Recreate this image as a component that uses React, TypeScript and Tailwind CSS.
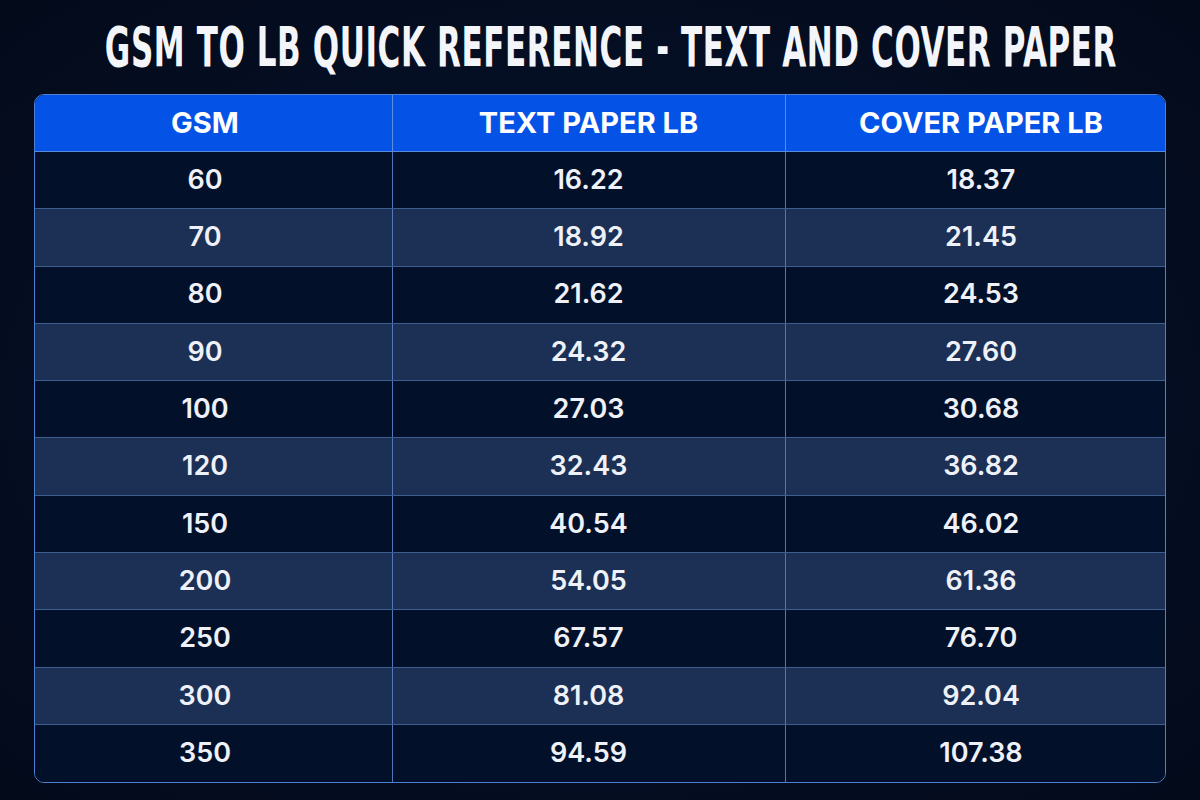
import React from "react";

const rows: [string, string, string][] = [
  ["60", "16.22", "18.37"],
  ["70", "18.92", "21.45"],
  ["80", "21.62", "24.53"],
  ["90", "24.32", "27.60"],
  ["100", "27.03", "30.68"],
  ["120", "32.43", "36.82"],
  ["150", "40.54", "46.02"],
  ["200", "54.05", "61.36"],
  ["250", "67.57", "76.70"],
  ["300", "81.08", "92.04"],
  ["350", "94.59", "107.38"],
];

export default function App() {
  return (
    <div
      className="w-[1200px] h-[800px] overflow-hidden bg-[radial-gradient(ellipse_at_center,#0a1a36_0%,#050f24_55%,#030a1a_100%)] flex flex-col items-center"
      style={{ fontFamily: "Inter, 'Noto Sans', sans-serif" }}
    >
      <div className="h-[94px] w-full flex items-start justify-center pt-[19px] pl-[22px] overflow-hidden">
        <h1
          className="text-[56px] leading-[56px] font-bold text-[#f4f5f8] whitespace-nowrap tracking-[1px] scale-x-[0.615] origin-center shrink-0"
          style={{ fontFamily: "'DejaVu Sans Condensed', 'DejaVu Sans', sans-serif" }}
        >
          GSM TO LB QUICK REFERENCE - TEXT AND COVER PAPER
        </h1>
      </div>
      <div className="w-[1132px] ml-[-1px] rounded-[10px] border border-[#4f7fcf] overflow-hidden">
        <div className="flex h-[57px] bg-[#0552e6] text-white text-[29px] font-bold border-b border-[#5a8ad8]">
          <div className="w-[358px] flex items-center justify-center pr-[16px] border-r border-[#5d8de0]">GSM</div>
          <div className="w-[393px] flex items-center justify-center border-r border-[#5d8de0]">TEXT PAPER LB</div>
          <div className="flex-1 flex items-center justify-center pl-[12px]">COVER PAPER LB</div>
        </div>
        {rows.map((r, i) => (
          <div
            key={r[0]}
            className={`flex h-[57.3px] text-[27px] font-semibold text-[#eef1f7] ${
              i % 2 === 0 ? "bg-[#03102a]" : "bg-[#1c2f54]"
            } ${i < rows.length - 1 ? "border-b border-[#3f5e90]" : ""}`}
          >
            <div className="w-[358px] flex items-center justify-center pr-[16px] border-r border-[#4f78b8]">{r[0]}</div>
            <div className="w-[393px] flex items-center justify-center border-r border-[#4f78b8]">{r[1]}</div>
            <div className="flex-1 flex items-center justify-center pl-[12px]">{r[2]}</div>
          </div>
        ))}
      </div>
    </div>
  );
}
